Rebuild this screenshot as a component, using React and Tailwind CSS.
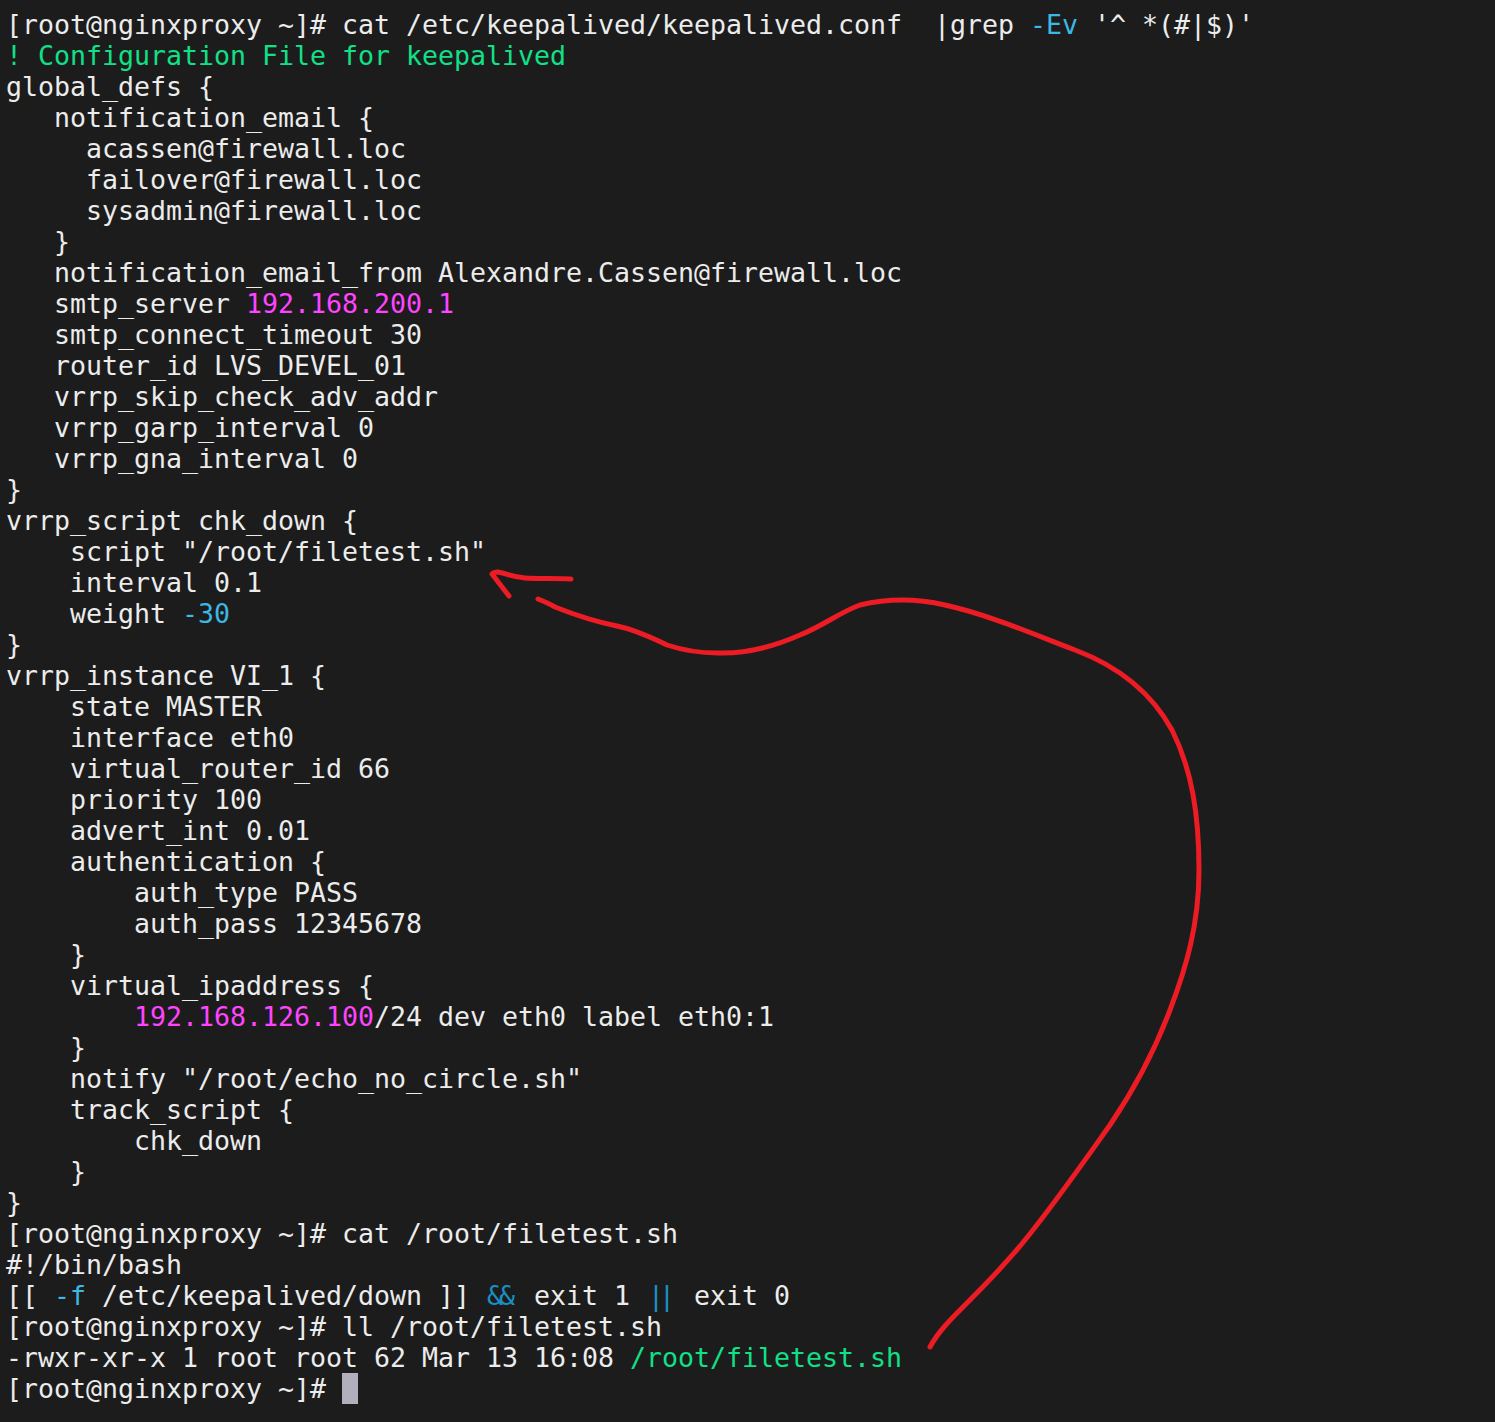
import React from 'react'

const GREEN = 'text-[#12e087]'
const PINK = 'text-[#ff44ff]'
const CYAN = 'text-[#3db7e4]'
// the && and || pairs sit tighter than two normal cells in the terminal
const AND = 'inline-block w-8 pl-px tracking-[-4px] text-[#1a8fc4]'
const OR = 'inline-block w-8 pl-[2px] tracking-[-5px] text-[#1a8fc4]'

const lines = [
  [["[root@nginxproxy ~]# cat /etc/keepalived/keepalived.conf  |grep "], ["-Ev", CYAN], [" '^ *(#|$)'"]],
  [["! Configuration File for keepalived", GREEN]],
  [["global_defs {"]],
  [["   notification_email {"]],
  [["     acassen@firewall.loc"]],
  [["     failover@firewall.loc"]],
  [["     sysadmin@firewall.loc"]],
  [["   }"]],
  [["   notification_email_from Alexandre.Cassen@firewall.loc"]],
  [["   smtp_server "], ["192.168.200.1", PINK]],
  [["   smtp_connect_timeout 30"]],
  [["   router_id LVS_DEVEL_01"]],
  [["   vrrp_skip_check_adv_addr"]],
  [["   vrrp_garp_interval 0"]],
  [["   vrrp_gna_interval 0"]],
  [["}"]],
  [["vrrp_script chk_down {"]],
  [["    script \"/root/filetest.sh\""]],
  [["    interval 0.1"]],
  [["    weight "], ["-30", CYAN]],
  [["}"]],
  [["vrrp_instance VI_1 {"]],
  [["    state MASTER"]],
  [["    interface eth0"]],
  [["    virtual_router_id 66"]],
  [["    priority 100"]],
  [["    advert_int 0.01"]],
  [["    authentication {"]],
  [["        auth_type PASS"]],
  [["        auth_pass 12345678"]],
  [["    }"]],
  [["    virtual_ipaddress {"]],
  [["        "], ["192.168.126.100", PINK], ["/24 dev eth0 label eth0:1"]],
  [["    }"]],
  [["    notify \"/root/echo_no_circle.sh\""]],
  [["    track_script {"]],
  [["        chk_down"]],
  [["    }"]],
  [["}"]],
  [["[root@nginxproxy ~]# cat /root/filetest.sh"]],
  [["#!/bin/bash"]],
  [["[[ "], ["-f", CYAN], [" /etc/keepalived/down ]] "], ["&&", AND], [" exit 1 "], ["||", OR], [" exit 0"]],
  [["[root@nginxproxy ~]# ll /root/filetest.sh"]],
  [["-rwxr-xr-x 1 root root 62 Mar 13 16:08 "], ["/root/filetest.sh", GREEN]],
]

export default function App() {
  return (
    <div className="relative w-[1495px] h-[1422px] overflow-hidden bg-[#1c1c1c]">
      <div className="pl-[6px] pt-[9px] font-['DejaVu_Sans_Mono',monospace] text-[26.58px] leading-[31px] text-[#ececec] whitespace-pre">
        {lines.map((segs, i) => (
          <div key={i} className="h-[31px]">
            {segs.map(([text, color], j) => (
              <span key={j} className={color}>{text}</span>
            ))}
          </div>
        ))}
        <div className="h-[31px] flex items-center">
          <span>[root@nginxproxy ~]# </span>
          <span className="w-4 h-[31px] bg-[#b0afbb]" />
        </div>
      </div>

      {/* hand drawn arrow on top of the terminal */}
      <svg className="absolute left-0 top-0" width="1495" height="1422" fill="none" stroke="#ed1c24" strokeWidth="5" strokeLinecap="round" strokeLinejoin="round">
        <path d="M930 1347C938 1332 950 1320 965 1305C985 1285 1005 1265 1025 1240C1055 1203 1085 1160 1110 1125C1135 1088 1155 1050 1170 1010C1186 968 1199 925 1199 870C1199 815 1192 770 1172 730C1150 690 1115 665 1075 650C1035 635 990 615 945 605C915 598 885 599 860 605C840 612 825 625 800 635C775 646 748 654 718 653C697 653 682 650 667 645C652 638 637 630 617 626C597 622 575 615 555 607C550 604 543 601 538 599" />
        <path d="M571 579C555 578 540 579 525 578C512 577 505 573 498 572C495 572 493 573 492 574L509 596" />
      </svg>
    </div>
  )
}
